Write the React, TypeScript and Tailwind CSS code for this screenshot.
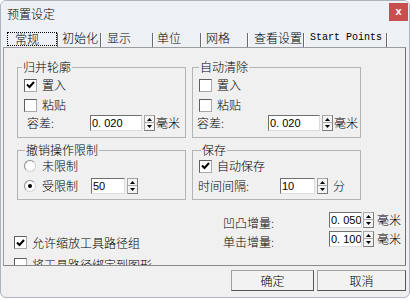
import React from 'react'

const Spin = () => {
  return (
    <div className="flex flex-col w-[11px] h-[16px]">
      <div className="h-[8px] border border-[#a8a8a8] border-r-[#7a7a7a] bg-[#f4f4f4] flex items-center justify-center">
        <svg width="5" height="3" viewBox="0 0 5 3"><path d="M0 3L2.5 0L5 3Z" fill="#000" /></svg>
      </div>
      <div className="h-[8px] border border-t-0 border-[#a8a8a8] border-r-[#7a7a7a] border-b-[#7a7a7a] bg-[#f4f4f4] flex items-center justify-center">
        <svg width="5" height="3" viewBox="0 0 5 3"><path d="M0 0L2.5 3L5 0Z" fill="#000" /></svg>
      </div>
    </div>
  )
}

const NumBox = ({ value, w }: { value: string; w: string }) => {
  return (
    <div className={`${w} h-[16px] shrink-0 bg-white border border-[#6f6f6f] border-r-[#dcdcdc] border-b-[#dcdcdc] pl-[1px] text-[11px] leading-[14px] whitespace-nowrap overflow-hidden font-['Liberation_Sans',sans-serif] font-normal text-black`}>
      {value}
    </div>
  )
}

const Check = ({ checked }: { checked?: boolean }) => {
  return (
    <div className="w-[13px] h-[13px] shrink-0 bg-white border border-[#5f5f5f] border-r-[#a9a9a9] border-b-[#a9a9a9] flex items-center justify-center">
      {checked && (
        <svg width="9" height="8" viewBox="0 0 9 8">
          <path d="M1 3.5L3.5 6L8 1" stroke="#000" strokeWidth="2" fill="none" />
        </svg>
      )}
    </div>
  )
}

const Radio = ({ on }: { on?: boolean }) => {
  return (
    <div className="w-[12px] h-[12px] shrink-0 rounded-full bg-white border border-[#8c8c8c] border-b-[#d0d0d0] border-r-[#d0d0d0] flex items-center justify-center">
      {on && <div className="w-[4px] h-[4px] rounded-full bg-black" />}
    </div>
  )
}

const tabs = [
  { label: '初始化', w: 'w-[41px]', pl: 'pl-[3px]' },
  { label: '显示', w: 'w-[50px]', pl: 'pl-[5px]' },
  { label: '单位', w: 'w-[46px]', pl: 'pl-[3px]' },
  { label: '网格', w: 'w-[45px]', pl: 'pl-[4px]' },
  { label: '查看设置', w: 'w-[54px]', pl: 'pl-[5px]' },
]

const Sep = () => <div className="w-[2px] h-[14px] border-l border-[#6a6a6a] bg-white" />

export default function App() {
  return (
    <div className="w-[412px] h-[300px] bg-white overflow-hidden font-['Noto_Sans_CJK_SC',sans-serif] font-light text-[12px] leading-[14px] text-black">
      <div className="w-[410px] h-[298px] border border-[#aeb5bd] rounded-[6px] bg-[#f0f0f0] flex flex-col overflow-hidden">
        {/* title bar */}
        <div className="h-[27px] shrink-0 bg-[#edf1f6] flex items-start justify-between">
          <span className="pl-[6px] pt-[5px] leading-[16px]">预置设定</span>
          <div className="w-[19px] h-[18px] mt-[2px] mr-[1px] bg-[#c7504f] text-white flex items-center justify-center text-[11px] font-bold font-['Liberation_Sans',sans-serif] leading-none pb-[2px]">
            x
          </div>
        </div>

        {/* tabs */}
        <div className="h-[19px] shrink-0 bg-[#edf1f6] flex items-end pl-[6px]">
          <div className="w-[50px] h-[14px] mb-[1px] border border-dotted border-black pl-[7px] leading-[12px]">常规</div>
          <Sep />
          {tabs.map((t) => (
            <React.Fragment key={t.label}>
              <div className={`${t.w} ${t.pl} h-[14px] mb-[1px] leading-[12px]`}>{t.label}</div>
              <Sep />
            </React.Fragment>
          ))}
          <div className="w-[81px] pl-[5px] h-[14px] mb-[1px] leading-[12px] text-[10px] font-normal font-['Liberation_Mono',monospace]">Start Points</div>
          <Sep />
        </div>

        {/* panel */}
        <div className="ml-[2px] w-[403px] h-[219px] shrink-0 border border-[#9c9c9c] border-r-[#6e6e6e] border-b-[#8a8a8a] bg-[#f0f0f0] overflow-hidden">
          <div className="flex gap-[6px] ml-[13px] mt-[12px]">
            <fieldset className="w-[169px] h-[78px] border border-[#b4b4b4]">
              <legend className="ml-[4px] px-[1px] leading-[14px]">归并轮廓</legend>
              <div className="pl-[6px] pt-[1px]">
                <div className="h-[20px] flex items-center gap-[5px]"><Check checked /><span>置入</span></div>
                <div className="h-[20px] flex items-center gap-[5px]"><Check /><span>粘贴</span></div>
                <div className="h-[16px] flex items-center">
                  <span className="w-[66px] pl-[3px]">容差:</span>
                  <NumBox value="0. 020" w="w-[52px]" />
                  <div className="ml-[2px]"><Spin /></div>
                  <span className="ml-[1px]">毫米</span>
                </div>
              </div>
            </fieldset>
            <fieldset className="w-[169px] h-[78px] border border-[#b4b4b4]">
              <legend className="ml-[6px] px-[1px] leading-[14px]">自动清除</legend>
              <div className="pl-[6px] pt-[1px]">
                <div className="h-[20px] flex items-center gap-[5px]"><Check /><span>置入</span></div>
                <div className="h-[20px] flex items-center gap-[5px]"><Check /><span>粘贴</span></div>
                <div className="h-[16px] flex items-center">
                  <span className="w-[71px] -ml-[2px]">容差:</span>
                  <NumBox value="0. 020" w="w-[52px]" />
                  <div className="ml-[2px]"><Spin /></div>
                  <span className="ml-[1px]">毫米</span>
                </div>
              </div>
            </fieldset>
          </div>

          <div className="flex gap-[6px] ml-[13px] mt-[5px]">
            <fieldset className="w-[169px] h-[57px] border border-[#b4b4b4]">
              <legend className="ml-[7px] px-[1px] leading-[14px]">撤销操作限制</legend>
              <div className="pl-[6px] pt-[1px]">
                <div className="h-[16px] flex items-center gap-[6px]"><Radio /><span>未限制</span></div>
                <div className="h-[16px] mt-[4px] flex items-center">
                  <Radio on />
                  <span className="ml-[6px] w-[49px]">受限制</span>
                  <NumBox value="50" w="w-[34px]" />
                  <div className="ml-[2px]"><Spin /></div>
                </div>
              </div>
            </fieldset>
            <fieldset className="w-[169px] h-[57px] border border-[#b4b4b4]">
              <legend className="ml-[8px] px-[1px] leading-[14px]">保存</legend>
              <div className="pl-[6px] pt-[1px]">
                <div className="h-[16px] flex items-center gap-[5px]"><Check checked /><span>自动保存</span></div>
                <div className="h-[16px] mt-[4px] flex items-center">
                  <span className="w-[82px] -ml-[1px]">时间间隔:</span>
                  <NumBox value="10" w="w-[35px]" />
                  <div className="ml-[2px]"><Spin /></div>
                  <span className="ml-[5px]">分</span>
                </div>
              </div>
            </fieldset>
          </div>

          <div className="flex mt-[12px]">
            <div className="w-[219px] shrink-0 pl-[10px]">
              <div className="mt-[24px] h-[13px] flex items-center gap-[5px]"><Check checked /><span>允许缩放工具路径组</span></div>
              <div className="mt-[9px] h-[13px] flex items-center gap-[5px]"><Check /><span>将工具路径绑定到图形</span></div>
            </div>
            <div>
              <div className="h-[16px] flex items-center">
                <span className="w-[106px] shrink-0 pt-[5px]">凹凸增量:</span>
                <NumBox value="0. 050" w="w-[33px]" />
                <div className="ml-[1px]"><Spin /></div>
                <span className="ml-[3px] whitespace-nowrap">毫米</span>
              </div>
              <div className="h-[16px] mt-[3px] flex items-center">
                <span className="w-[106px] shrink-0 pt-[5px]">单击增量:</span>
                <NumBox value="0. 100" w="w-[33px]" />
                <div className="ml-[1px]"><Spin /></div>
                <span className="ml-[3px] whitespace-nowrap">毫米</span>
              </div>
            </div>
          </div>
        </div>

        {/* buttons */}
        <div className="flex justify-end gap-[3px] pr-[3px] mt-[4px]">
          <button className="w-[83px] h-[21px] bg-[#f2f2f2] border border-[#a0a0a0] border-r-[#555] border-b-[#555] leading-[19px]">确定</button>
          <button className="w-[89px] h-[21px] bg-[#f2f2f2] border border-[#a0a0a0] border-r-[#555] border-b-[#555] leading-[19px]">取消</button>
        </div>
      </div>
    </div>
  )
}
